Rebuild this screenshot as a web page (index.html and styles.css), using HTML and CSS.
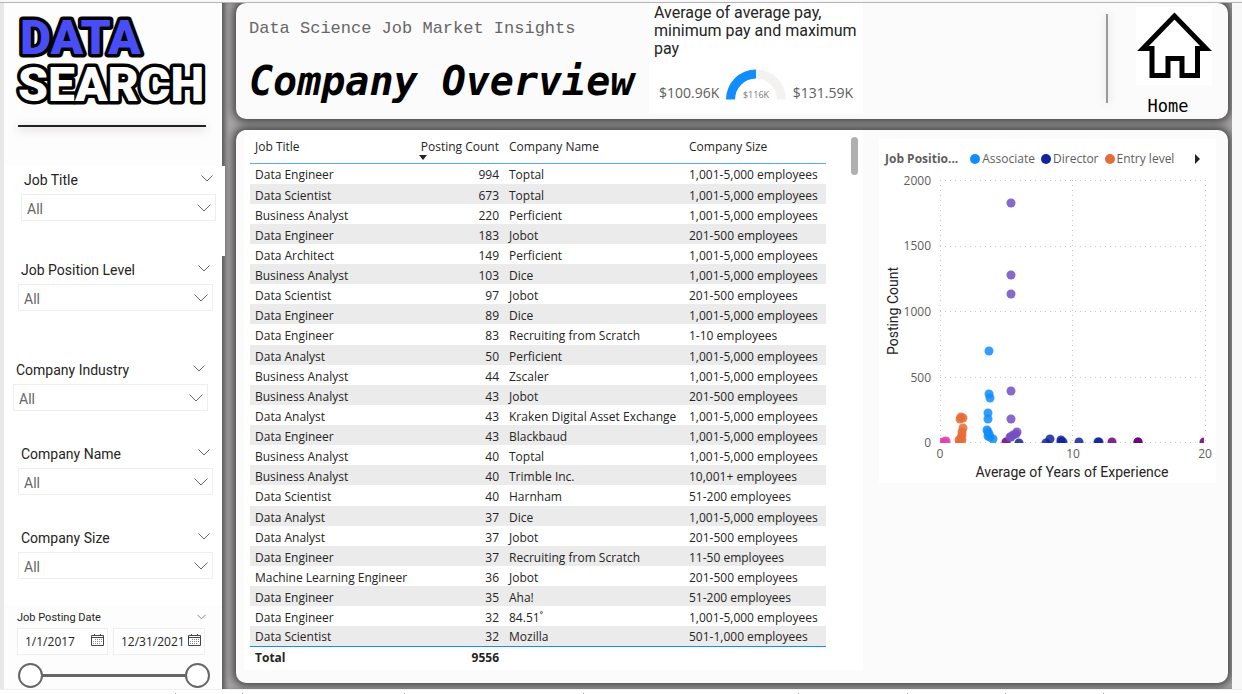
FILE: index.html
```html
<!DOCTYPE html>
<html lang="en">
<head>
<meta charset="utf-8">
<title>Company Overview</title>
<link rel="stylesheet" href="styles.css">
</head>
<body>
<div class="app">
  <div class="top-edge"></div>
  <div class="stage">
    <aside class="sidebar">
      <svg class="logo" viewBox="0 0 218 108" role="img" aria-label="Data Search">
        <text class="logo-data" x="16" y="51">DATA</text>
        <text class="logo-search" x="14" y="98">SEARCH</text>
      </svg>
      <hr class="logo-rule">

      <section class="slicer slicer-title">
        <div class="slicer-head"><label for="f-title">Job Title</label>
          <button class="chev" aria-label="Collapse Job Title"><svg viewBox="0 0 12 7"><path d="M.5.5 6 6 11.5.5"/></svg></button></div>
        <div class="drop"><select id="f-title"><option>All</option></select><svg viewBox="0 0 14 8"><path d="M.5.5 7 7 13.5.5"/></svg></div>
      </section>
      <section class="slicer slicer-level">
        <div class="slicer-head"><label for="f-level">Job Position Level</label>
          <button class="chev" aria-label="Collapse Job Position Level"><svg viewBox="0 0 12 7"><path d="M.5.5 6 6 11.5.5"/></svg></button></div>
        <div class="drop"><select id="f-level"><option>All</option></select><svg viewBox="0 0 14 8"><path d="M.5.5 7 7 13.5.5"/></svg></div>
      </section>
      <section class="slicer slicer-industry">
        <div class="slicer-head"><label for="f-industry">Company Industry</label>
          <button class="chev" aria-label="Collapse Company Industry"><svg viewBox="0 0 12 7"><path d="M.5.5 6 6 11.5.5"/></svg></button></div>
        <div class="drop"><select id="f-industry"><option>All</option></select><svg viewBox="0 0 14 8"><path d="M.5.5 7 7 13.5.5"/></svg></div>
      </section>
      <section class="slicer">
        <div class="slicer-head"><label for="f-name">Company Name</label>
          <button class="chev" aria-label="Collapse Company Name"><svg viewBox="0 0 12 7"><path d="M.5.5 6 6 11.5.5"/></svg></button></div>
        <div class="drop"><select id="f-name"><option>All</option></select><svg viewBox="0 0 14 8"><path d="M.5.5 7 7 13.5.5"/></svg></div>
      </section>
      <section class="slicer slicer-size">
        <div class="slicer-head"><label for="f-size">Company Size</label>
          <button class="chev" aria-label="Collapse Company Size"><svg viewBox="0 0 12 7"><path d="M.5.5 6 6 11.5.5"/></svg></button></div>
        <div class="drop"><select id="f-size"><option>All</option></select><svg viewBox="0 0 14 8"><path d="M.5.5 7 7 13.5.5"/></svg></div>
      </section>
      <section class="dates">
        <div class="dates-head"><span>Job Posting Date</span>
          <button class="chev chev-small" aria-label="Collapse Job Posting Date"><svg viewBox="0 0 12 7"><path d="M.5.5 6 6 11.5.5"/></svg></button></div>
        <div class="date-row">
          <div class="date"><input type="text" aria-label="Start date" value="1/1/2017">
            <svg viewBox="0 0 13 12"><path class="cal" d="M.5 1.500h12v10H.5zM.5 3.500h12M3.500 0v2M9.500 0v2"/><path class="cal-days" d="M4 5.500h7M2 7.500h9M2 9.500h7"/></svg></div>
          <div class="date"><input type="text" aria-label="End date" value="12/31/2021">
            <svg viewBox="0 0 13 12"><path class="cal" d="M.5 1.500h12v10H.5zM.5 3.500h12M3.500 0v2M9.500 0v2"/><path class="cal-days" d="M4 5.500h7M2 7.500h9M2 9.500h7"/></svg></div>
        </div>
        <div class="range">
          <input type="range" aria-label="From" value="0">
          <input type="range" aria-label="To" value="100">
        </div>
      </section>
    </aside>

    <main class="canvas">
      <header class="panel banner">
        <div class="titles">
          <p class="subtitle">Data Science Job Market Insights</p>
          <h1>Company Overview</h1>
        </div>
        <section class="gauge">
          <h2>Average of average pay, minimum pay and maximum pay</h2>
          <div class="gauge-row">
            <span>$100.96K</span>
            <svg viewBox="0 0 60 30">
              <path class="g-rest" d="M30 0A30 30 0 0 1 60 30H51A21 21 0 0 0 30 9Z"/>
              <path class="g-fill" d="M0 30A30 30 0 0 1 30 0V9A21 21 0 0 0 9 30Z"/>
              <text x="30" y="28">$116K</text>
            </svg>
            <span>$131.59K</span>
          </div>
        </section>
        <div class="divider"></div>
        <a class="home" href="#home">
          <svg viewBox="0 0 76 78"><path d="M38.500 9 7 41.500H16V68.500H32V51.500H46V68.500H61.500V41.500H70Z"/></svg>
          <span>Home</span>
        </a>
      </header>

      <section class="panel report">
        <div class="table-card">
          <table>
            <colgroup><col class="c-title"><col class="c-count"><col class="c-name"><col class="c-size"></colgroup>
            <thead><tr><th>Job Title</th><th class="num sorted">Posting Count</th><th>Company Name</th><th>Company Size</th></tr></thead>
            <tbody>
              <tr><td>Data Engineer</td><td class="num">994</td><td>Toptal</td><td>1,001-5,000 employees</td></tr>
              <tr><td>Data Scientist</td><td class="num">673</td><td>Toptal</td><td>1,001-5,000 employees</td></tr>
              <tr><td>Business Analyst</td><td class="num">220</td><td>Perficient</td><td>1,001-5,000 employees</td></tr>
              <tr><td>Data Engineer</td><td class="num">183</td><td>Jobot</td><td>201-500 employees</td></tr>
              <tr><td>Data Architect</td><td class="num">149</td><td>Perficient</td><td>1,001-5,000 employees</td></tr>
              <tr><td>Business Analyst</td><td class="num">103</td><td>Dice</td><td>1,001-5,000 employees</td></tr>
              <tr><td>Data Scientist</td><td class="num">97</td><td>Jobot</td><td>201-500 employees</td></tr>
              <tr><td>Data Engineer</td><td class="num">89</td><td>Dice</td><td>1,001-5,000 employees</td></tr>
              <tr><td>Data Engineer</td><td class="num">83</td><td>Recruiting from Scratch</td><td>1-10 employees</td></tr>
              <tr><td>Data Analyst</td><td class="num">50</td><td>Perficient</td><td>1,001-5,000 employees</td></tr>
              <tr><td>Business Analyst</td><td class="num">44</td><td>Zscaler</td><td>1,001-5,000 employees</td></tr>
              <tr><td>Business Analyst</td><td class="num">43</td><td>Jobot</td><td>201-500 employees</td></tr>
              <tr><td>Data Analyst</td><td class="num">43</td><td>Kraken Digital Asset Exchange</td><td>1,001-5,000 employees</td></tr>
              <tr><td>Data Engineer</td><td class="num">43</td><td>Blackbaud</td><td>1,001-5,000 employees</td></tr>
              <tr><td>Business Analyst</td><td class="num">40</td><td>Toptal</td><td>1,001-5,000 employees</td></tr>
              <tr><td>Business Analyst</td><td class="num">40</td><td>Trimble Inc.</td><td>10,001+ employees</td></tr>
              <tr><td>Data Scientist</td><td class="num">40</td><td>Harnham</td><td>51-200 employees</td></tr>
              <tr><td>Data Analyst</td><td class="num">37</td><td>Dice</td><td>1,001-5,000 employees</td></tr>
              <tr><td>Data Analyst</td><td class="num">37</td><td>Jobot</td><td>201-500 employees</td></tr>
              <tr><td>Data Engineer</td><td class="num">37</td><td>Recruiting from Scratch</td><td>11-50 employees</td></tr>
              <tr><td>Machine Learning Engineer</td><td class="num">36</td><td>Jobot</td><td>201-500 employees</td></tr>
              <tr><td>Data Engineer</td><td class="num">35</td><td>Aha!</td><td>51-200 employees</td></tr>
              <tr><td>Data Engineer</td><td class="num">32</td><td>84.51˚</td><td>1,001-5,000 employees</td></tr>
              <tr><td>Data Scientist</td><td class="num">32</td><td>Mozilla</td><td>501-1,000 employees</td></tr>
            </tbody>
            <tfoot><tr><td>Total</td><td class="num">9556</td><td></td><td></td></tr></tfoot>
          </table>
          <div class="scrollbar"></div>
        </div>

        <div class="chart-card">
          <div class="legend">
            <b>Job Positio...</b>
            <span><i class="dot associate"></i>Associate</span>
            <span><i class="dot director"></i>Director</span>
            <span><i class="dot entry"></i>Entry level</span>
            <button aria-label="More levels"><svg viewBox="0 0 5 10"><path d="M0 0 5 5 0 10Z"/></svg></button>
          </div>
          <svg class="chart" viewBox="0 0 337 315" role="img" aria-label="Posting Count by Average of Years of Experience">
            <defs><clipPath id="plot"><rect width="264" height="263"/></clipPath></defs>
            <g transform="translate(61 12)">
              <path class="grid" d="M0 .5H265M0 66.500H265M0 131.500H265M0 197.500H265M0 262.500H265M.5 0V263M132.500 0V263M265.500 0V263"/>
              <g clip-path="url(#plot)">
                <g class="p-pink"><circle cx="2" cy="262" r="4.500"/><circle cx="6" cy="261" r="4.500"/><circle cx="5" cy="262" r="4.500"/></g>
                <g class="p-orange"><circle cx="21" cy="237" r="4.500"/><circle cx="23" cy="238" r="4.500"/><circle cx="20" cy="239" r="4.500"/><circle cx="23" cy="248" r="4.500"/><circle cx="22" cy="252" r="4.500"/><circle cx="22" cy="255" r="4.500"/><circle cx="21" cy="258" r="4.500"/><circle cx="19" cy="260" r="4.500"/><circle cx="22" cy="260" r="4.500"/><circle cx="20" cy="262" r="4.500"/></g>
                <g class="p-purple"><circle cx="66" cy="262" r="4.500"/></g>
                <g class="p-blue"><circle cx="49" cy="171" r="4.500"/><circle cx="49" cy="214" r="4.500"/><circle cx="50" cy="218" r="4.500"/><circle cx="48" cy="233" r="4.500"/><circle cx="48" cy="239" r="4.500"/><circle cx="47" cy="250" r="4.500"/><circle cx="48" cy="252" r="4.500"/><circle cx="49" cy="254" r="4.500"/><circle cx="48" cy="256" r="4.500"/><circle cx="50" cy="257" r="4.500"/><circle cx="53" cy="259" r="4.500"/></g>
                <g class="p-violet"><circle cx="71" cy="23" r="4.500"/><circle cx="71" cy="95" r="4.500"/><circle cx="71" cy="114" r="4.500"/><circle cx="71" cy="211" r="4.500"/><circle cx="71" cy="239" r="4.500"/><circle cx="77" cy="252" r="4.500"/><circle cx="76" cy="254" r="4.500"/><circle cx="73" cy="255" r="4.500"/><circle cx="71" cy="257" r="4.500"/><circle cx="70" cy="257" r="4.500"/></g>
                <g class="p-navy"><circle cx="79" cy="263" r="4.500"/><circle cx="106" cy="263" r="4.500"/><circle cx="110" cy="259" r="4.500"/><circle cx="121" cy="260" r="4.500"/><circle cx="121" cy="262" r="4.500"/><circle cx="123" cy="262" r="4.500"/><circle cx="139" cy="262" r="4.500"/><circle cx="158" cy="262" r="4.500"/><circle cx="159" cy="262" r="4.500"/></g>
                <g class="p-purple"><circle cx="172" cy="262" r="4.500"/><circle cx="198" cy="262" r="4.500"/><circle cx="198" cy="262" r="4.500"/><circle cx="264" cy="262" r="4.500"/></g>
              </g>
              <g class="ticks-y"><text x="-9" y="5">2000</text><text x="-9" y="70">1500</text><text x="-9" y="136">1000</text><text x="-9" y="202">500</text><text x="-9" y="267">0</text></g>
              <g class="ticks-x"><text x="0" y="278">0</text><text x="133" y="278">10</text><text x="265" y="278">20</text></g>
              <text class="axis" x="132" y="297">Average of Years of Experience</text>
              <text class="axis" transform="translate(-42 131) rotate(-90)">Posting Count</text>
            </g>
          </svg>
        </div>
      </section>
    </main>
  </div>
  <div class="tab-edge"><i class="w-a"></i><i class="w-b"></i><i class="w-c"></i><i class="w-d"></i><i class="w-e"></i><i class="w-f"></i><i class="w-g"></i><i class="w-g"></i></div>
</div>
</body>
</html>
```

FILE: styles.css
```css
* { box-sizing: border-box; }
body {
  margin: 0;
  background: #fff;
  color: #252423;
  font-family: "Open Sans", "Noto Sans", sans-serif;
  font-size: 12px;
}
h1, h2, p { margin: 0; font-weight: normal; }
button { padding: 0; border: 0; background: none; display: flex; }

.app { min-height: 100vh; display: flex; flex-direction: column; }
.top-edge { height: 3px; background: #f8f8f8; border-bottom: 1px solid #b4b4b4; }
.stage {
  flex: 1;
  display: grid;
  grid-template-columns: 218px 1fr;
  padding: 0 10px 0 4px;
  background: linear-gradient(90deg, #e8e8e8 0 4px, #f8f8f8 4px);
}
.tab-edge { height: 5px; display: flex; align-items: flex-end; background: #fff; border-top: 1px solid #f0f0f0; }
.tab-edge i { height: 1px; border-right: 1px solid #999; }
.w-a { width: 176px; }
.w-b { width: 67px; }
.w-c { width: 162px; }
.w-d { width: 179px; }
.w-e { width: 215px; }
.w-f { width: 109px; }
.w-g { width: 98px; }

/* Sidebar */
.sidebar { background: #fdfdfd; font-family: Roboto, sans-serif; z-index: 1; }
.logo { display: block; width: 100%; height: 108px; overflow: visible; }
.logo text {
  font: 900 48px Roboto, sans-serif;
  stroke: #000;
  stroke-width: 7px;
  stroke-linejoin: round;
  paint-order: stroke;
}
.logo-data { fill: #484df5; }
.logo-search { fill: #fdfdfd; }
.logo-rule {
  height: 2px;
  margin: 14px 16px 39px 14px;
  border: 0;
  background: #222;
  box-shadow: 0 2px 9px #b5a5a5;
}
.slicer { padding: 0 9px 29px 14px; background: #fff; }
.slicer-title { margin-right: -3px; padding: 0 9px 35px 17px; }
.slicer-level { padding-bottom: 45px; }
.slicer-industry { padding-left: 9px; padding-right: 14px; }
.slicer-size { padding-bottom: 27px; }
.slicer-head { height: 28px; display: flex; align-items: center; justify-content: space-between; padding: 0 3px; font-size: 14px; }
.slicer-head .chev { padding-bottom: 4px; }
.chev svg { width: 12px; height: 7px; }
.chev path, .drop path { fill: none; stroke: #666; }
.chev-small svg { width: 9px; height: 6px; }
.drop { display: grid; align-items: center; }
.drop > * { grid-area: 1 / 1; }
.drop select {
  height: 27px;
  padding: 2px 5px 0;
  border: 1px solid #eee;
  border-radius: 0;
  appearance: none;
  background: #fff;
  color: #666;
  font: 14px Roboto, sans-serif;
}
.drop svg { width: 14px; height: 8px; justify-self: end; margin-right: 5px; pointer-events: none; }

.dates { padding: 0 12px 0 13px; }
.dates-head { height: 22px; display: flex; align-items: center; justify-content: space-between; padding-right: 4px; font-size: 11px; }
.date-row { display: grid; grid-template-columns: 91px 92px; gap: 5px; }
.date { display: flex; align-items: center; height: 27px; padding-right: 3px; border: 1px solid #eee; background: #fff; }
.date input {
  flex: 1;
  min-width: 0;
  padding: 0 0 0 7px;
  border: 0;
  background: none;
  color: #252423;
  font: 12px "Open Sans", sans-serif;
}
.date svg { width: 13px; height: 12px; flex: none; margin-bottom: 3px; }
.cal { fill: none; stroke: #444; }
.cal-days { fill: none; stroke: #889; stroke-dasharray: 1 1; }
.range { display: grid; align-items: center; margin: 8px 0 0; padding-left: 1px; }
.range input {
  grid-area: 1 / 1;
  width: 100%;
  height: 25px;
  margin: 0;
  appearance: none;
  background: none;
  pointer-events: none;
}
.range input:first-child { background: linear-gradient(#666, #666) center / 150px 3px no-repeat; }
.range input::-webkit-slider-thumb {
  width: 25px;
  height: 25px;
  border: 2px solid #666;
  border-radius: 50%;
  appearance: none;
  background: #fff;
  pointer-events: auto;
}

/* Report canvas */
.canvas {
  display: flex;
  flex-direction: column;
  gap: 11px;
  padding: 0 4px 6px 14px;
  background: #a9a6a6;
  box-shadow: inset 5px 0 5px -2px #555;
  overflow: hidden;
}
.panel { border-radius: 10px; background: #fbfbfb; box-shadow: 0 0 9px 3px #444; }
.banner { display: flex; height: 116px; padding-right: 16px; }
.titles { padding: 16px 0 0 13px; width: 413px; white-space: nowrap; }
.subtitle { color: #666; font: 17px/20px "Liberation Mono", monospace; }
h1 { margin-top: 16px; color: #000; font: italic bold 40px/52px "DejaVu Sans Mono", monospace; }
.gauge { width: 214px; height: 111px; padding: 1px 5px 0; background: #fff; }
.gauge h2 { font: 16px/18px Roboto, sans-serif; }
.gauge-row { display: flex; justify-content: space-between; align-items: flex-end; padding: 11px 5px 0; color: #605e5c; font-size: 14px; line-height: 14px; }
.gauge-row svg { width: 60px; height: 31px; }
.g-fill { fill: #118dff; }
.g-rest { fill: #f3f2f1; }
.gauge text { fill: #777; font-size: 9px; text-anchor: middle; }
.divider { width: 2px; height: 89px; margin: 11px 28px 0 auto; background: #999; box-shadow: 0 0 8px #ccc; }
.home { width: 76px; display: flex; flex-direction: column; align-items: center; padding-top: 4px; color: #000; font: 17px/20px "DejaVu Sans Mono", monospace; text-decoration: none; }
.home svg { width: 76px; height: 78px; background: #fff; }
.home path { fill: none; stroke: #000; stroke-width: 5; }
.home span { margin-top: 11px; margin-right: 12px; }

.report { flex: 1; display: flex; align-items: flex-start; gap: 16px; padding: 0 12px 12px 8px; }
.table-card { flex: 0 0 619px; display: flex; justify-content: space-between; padding: 0 5px 2px 6px; background: #fff; }
table { width: 576px; border-collapse: collapse; table-layout: fixed; font-size: 12px; line-height: 16px; }
.c-title { width: 164px; }
.c-count { width: 90px; }
.c-name { width: 180px; }
.c-size { width: 142px; }
th, td { padding: 0 5px; text-align: left; font-weight: normal; white-space: nowrap; }
th { height: 33px; padding-top: 2px; border-bottom: 1px solid #5aa9f5; }
.num { text-align: right; }
.sorted { position: relative; }
.sorted::after {
  content: "";
  position: absolute;
  left: 5px;
  bottom: 3px;
  border: 4px solid transparent;
  border-top: 5px solid #252423;
  border-bottom: 0;
}
tbody td { height: 20px; padding-top: 3px; }
tbody tr:nth-child(8n+1) td { height: 21px; }
tbody tr:nth-child(even) { background: #ebebeb; }
tfoot td { height: 22px; padding-top: 1px; border-top: 1px solid #118dff; font-weight: bold; }
.scrollbar { width: 7px; height: 38px; margin-top: 7px; border-radius: 4px; background: #b0b0b0; }

.chart-card { flex: 0 0 337px; margin-top: 9px; background: #fff; }
.legend { display: flex; align-items: center; gap: 6px; height: 29px; padding: 10px 16px 0 6px; color: #605e5c; white-space: nowrap; }
.legend b { margin-right: 6px; }
.legend span { display: flex; align-items: center; gap: 2px; }
.legend button { margin-left: auto; }
.legend button svg { width: 5px; height: 10px; fill: #252423; }
.dot { width: 10px; height: 10px; border-radius: 50%; }
.associate { background: #118dff; }
.director { background: #12239e; }
.entry { background: #e66c37; }
.chart { display: block; width: 100%; }
.grid { fill: none; stroke: #c8c8c8; stroke-dasharray: 1 4; }
.chart circle { fill-opacity: .85; }
.p-pink { fill: #e044a7; }
.p-orange { fill: #e66c37; }
.p-blue { fill: #118dff; }
.p-violet { fill: #744ec2; }
.p-navy { fill: #12239e; }
.p-purple { fill: #6b007b; }
.ticks-y, .ticks-x { fill: #605e5c; font-size: 12px; }
.ticks-y { text-anchor: end; }
.ticks-x { text-anchor: middle; }
.axis { fill: #252423; font: 14px Roboto, sans-serif; text-anchor: middle; }
```
